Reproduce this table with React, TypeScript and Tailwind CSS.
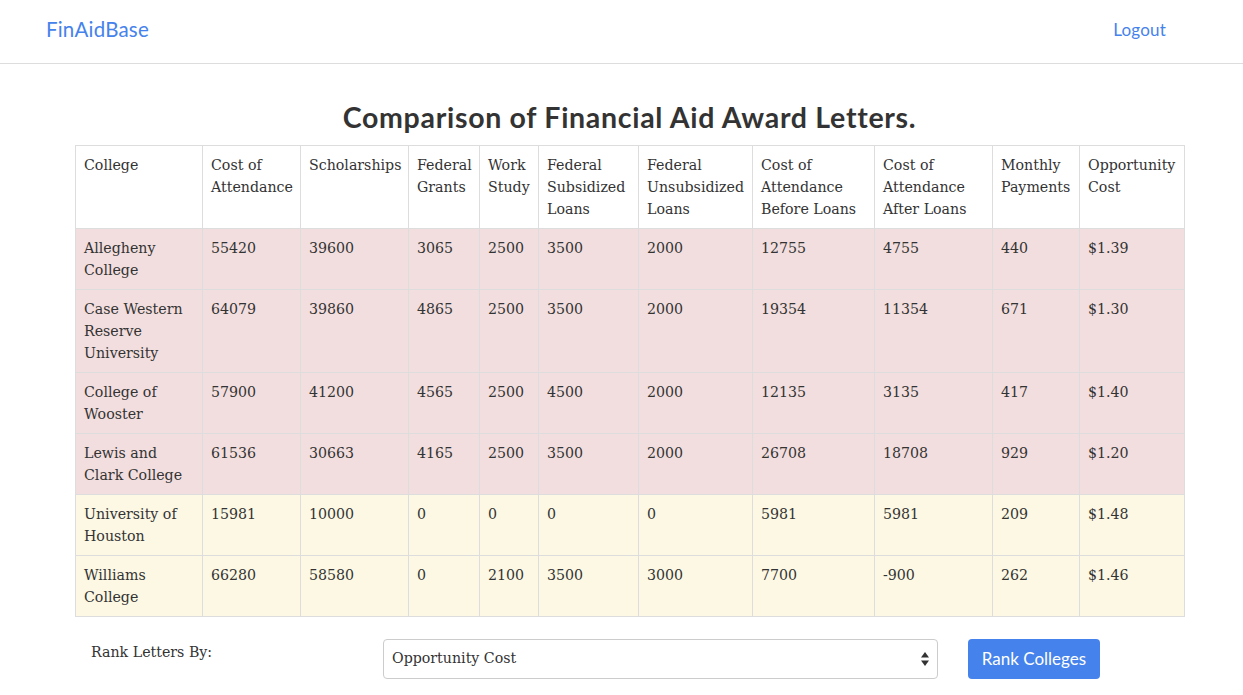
const SERIF = "font-['DejaVu_Serif',serif]";

type Row = {
  college: string;
  cost: string;
  scholarships: string;
  grants: string;
  work: string;
  subsidized: string;
  unsubsidized: string;
  before: string;
  after: string;
  monthly: string;
  opportunity: string;
  tone: "danger" | "warning";
};

const rows: Row[] = [
  { college: "Allegheny College", cost: "55420", scholarships: "39600", grants: "3065", work: "2500", subsidized: "3500", unsubsidized: "2000", before: "12755", after: "4755", monthly: "440", opportunity: "$1.39", tone: "danger" },
  { college: "Case Western Reserve University", cost: "64079", scholarships: "39860", grants: "4865", work: "2500", subsidized: "3500", unsubsidized: "2000", before: "19354", after: "11354", monthly: "671", opportunity: "$1.30", tone: "danger" },
  { college: "College of Wooster", cost: "57900", scholarships: "41200", grants: "4565", work: "2500", subsidized: "4500", unsubsidized: "2000", before: "12135", after: "3135", monthly: "417", opportunity: "$1.40", tone: "danger" },
  { college: "Lewis and Clark College", cost: "61536", scholarships: "30663", grants: "4165", work: "2500", subsidized: "3500", unsubsidized: "2000", before: "26708", after: "18708", monthly: "929", opportunity: "$1.20", tone: "danger" },
  { college: "University of Houston", cost: "15981", scholarships: "10000", grants: "0", work: "0", subsidized: "0", unsubsidized: "0", before: "5981", after: "5981", monthly: "209", opportunity: "$1.48", tone: "warning" },
  { college: "Williams College", cost: "66280", scholarships: "58580", grants: "0", work: "2100", subsidized: "3500", unsubsidized: "3000", before: "7700", after: "-900", monthly: "262", opportunity: "$1.46", tone: "warning" },
];

const headers = [
  "College",
  "Cost of Attendance",
  "Scholarships",
  "Federal Grants",
  "Work Study",
  "Federal Subsidized Loans",
  "Federal Unsubsidized Loans",
  "Cost of Attendance Before Loans",
  "Cost of Attendance After Loans",
  "Monthly Payments",
  "Opportunity Cost",
];

const widths = [127, 98, 108, 71, 59, 100, 114, 122, 118, 87, 105];

const cell = "border border-[#dddddd] p-2 align-top text-left font-normal";

function SelectArrows() {
  return (
    <svg width="8" height="14" viewBox="0 0 8 14" className="text-[#333]">
      <path d="M4 0 L8 5.5 L0 5.5 Z" fill="currentColor" />
      <path d="M4 14 L8 8.5 L0 8.5 Z" fill="currentColor" />
    </svg>
  );
}

export default function App() {
  return (
    <div className="min-h-screen bg-white text-[#333333]">
      <nav className="flex h-[64px] items-center justify-between border-b border-[#dddddd] pb-[4px] pl-[46px] pr-[77px] font-['Lato',sans-serif]">
        <span className="text-[20.5px] tracking-[0.2px] text-[#4582ec]">FinAidBase</span>
        <span className="text-[17px] tracking-[0.2px] text-[#4582ec]">Logout</span>
      </nav>

      <div className="mx-auto w-[1109px] translate-x-[8px]">
        <h1 className="mt-[33px] mb-[8px] text-center font-['Lato',sans-serif] text-[28.5px] font-bold leading-[40px] tracking-[0.7px] text-[#333]">
          Comparison of Financial Aid Award Letters.
        </h1>

        <table className={`w-[1109px] table-fixed border-collapse ${SERIF} text-[14.2px] leading-[22px]`}>
          <colgroup>
            {widths.map((w, i) => (
              <col key={i} style={{ width: w }} />
            ))}
          </colgroup>
          <thead>
            <tr className="bg-white">
              {headers.map((h) => (
                <th key={h} className={cell}>
                  {h}
                </th>
              ))}
            </tr>
          </thead>
          <tbody>
            {rows.map((r) => (
              <tr key={r.college} className={r.tone === "danger" ? "bg-[#f2dede]" : "bg-[#fcf8e3]"}>
                <td className={cell}>{r.college}</td>
                <td className={cell}>{r.cost}</td>
                <td className={cell}>{r.scholarships}</td>
                <td className={cell}>{r.grants}</td>
                <td className={cell}>{r.work}</td>
                <td className={cell}>{r.subsidized}</td>
                <td className={cell}>{r.unsubsidized}</td>
                <td className={cell}>{r.before}</td>
                <td className={cell}>{r.after}</td>
                <td className={cell}>{r.monthly}</td>
                <td className={cell}>{r.opportunity}</td>
              </tr>
            ))}
          </tbody>
        </table>

        <div className={`mt-[22px] flex items-start ${SERIF} text-[14.2px]`}>
          <label className="w-[308px] pt-[2px] pl-4 leading-[22px]">Rank Letters By:</label>
          <div className="flex h-[40px] w-[555px] items-center justify-between rounded-[4px] border border-[#cccccc] bg-white pl-2 pr-[8px]">
            <span>Opportunity Cost</span>
            <SelectArrows />
          </div>
          <button className="ml-[30px] h-[40px] w-[132px] rounded-[4px] bg-[#4582ec] font-['Lato',sans-serif] text-[17px] text-white">
            Rank Colleges
          </button>
        </div>
      </div>
    </div>
  );
}
